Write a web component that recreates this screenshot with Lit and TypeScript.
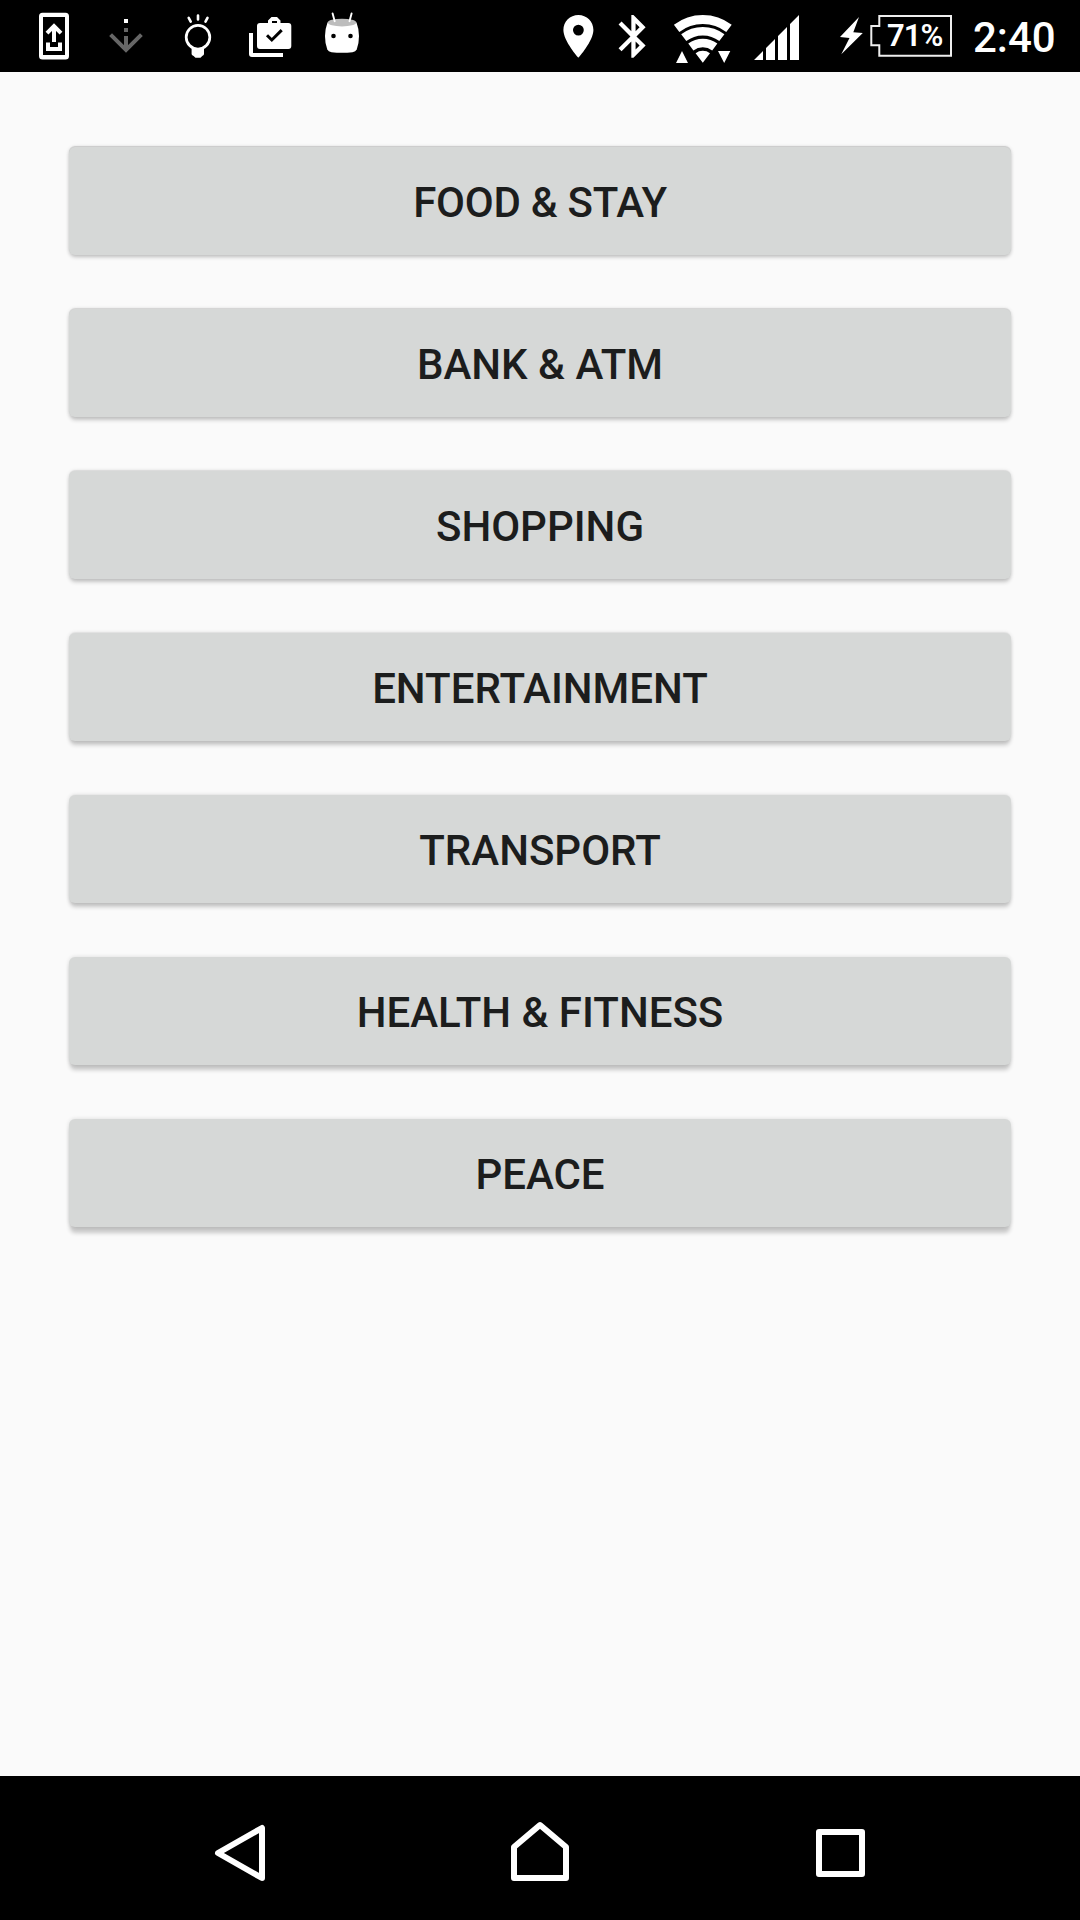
import { LitElement, html, css, svg } from "lit";
import { customElement, property } from "lit/decorators.js";
import { styleMap } from "lit/directives/style-map.js";

@customElement("status-bar")
class StatusBar extends LitElement {
  static styles = css`
    :host {
      display: flex;
      justify-content: space-between;
      height: 72px;
      background: #000;
      color: #fff;
      font-family: Roboto, sans-serif;
      font-weight: 500;
    }
    svg {
      display: block;
      flex: none;
    }
    .group {
      display: flex;
      height: 72px;
    }
    .left {
      padding-left: 18px;
    }
    .right {
      padding-right: 26px;
    }
    .battery {
      display: grid;
      margin-left: 24px;
    }
    .battery > * {
      grid-area: 1 / 1;
    }
    .percent {
      padding-left: 53px;
      font-size: 31px;
      font-weight: 600;
      line-height: 71px;
      letter-spacing: -0.9px;
    }
    .clock {
      width: 81px;
      margin-left: 13px;
      font-size: 42px;
      line-height: 76px;
      text-align: right;
      white-space: nowrap;
    }
  `;

  render() {
    const band = (inner: number, outer: number) => {
      const r = (inner + outer) / 2;
      const x = r * 0.606;
      const y = 62.7 - r * 0.795;
      return svg`<path d="M${702.8 - x} ${y}A${r} ${r} 0 0 1 ${702.8 + x} ${y}"
        fill="none" stroke="#fff" stroke-width=${outer - inner} />`;
    };
    return html`
      <div class="group left">
        <svg width="72" height="72" viewBox="18 0 72 72">
          <path fill="#fff" fill-rule="evenodd" d="M42.5 12.7H65.5Q69 12.7 69 16.2V56Q69 59.5 65.5 59.5H42.5Q39 59.5 39 56V16.2Q39 12.7 42.5 12.7zM43 17V55H65V17z" />
          <path fill="none" stroke="#fff" stroke-width="4" d="M54 26V42M47 33.2L54 26.2L61 33.2M48 42.5V49H60V42.5" />
        </svg>
        <svg width="72" height="72" viewBox="90 0 72 72">
          <path fill="#fff" d="M124 19h4v4h-4z" />
          <path fill="#666" d="M124 28h4v4h-4zM124 36h4v13h-4z" />
          <path fill="none" stroke="#666" stroke-width="4" d="M110.6 34.6L126 50L141.4 34.6" />
        </svg>
        <svg width="72" height="72" viewBox="162 0 72 72">
          <circle cx="198" cy="37.2" r="11.8" fill="none" stroke="#fff" stroke-width="2.7" />
          <path fill="none" stroke="#fff" stroke-width="2.6" stroke-linecap="round" d="M188.7 17.8L190.7 21.6M198 15.5V19.5M207.5 17.8L205.5 21.6" />
          <path fill="#fff" d="M191.6 46.5Q198 50 204 46.5V54.3Q203.6 55.5 202.2 56L200.5 57.8H195.5L193.6 56Q192 55.5 191.6 54.3z" />
        </svg>
        <svg width="72" height="72" viewBox="234 0 72 72">
          <path fill="#fff" fill-rule="evenodd" d="M260 23H268V20.5L271.5 17H277L280.5 20.5V23H288.3Q291.3 23 291.3 26V46Q291.3 49 288.3 49H260Q257 49 257 46V26Q257 23 260 23zM272 21V23H277V21z" />
          <path fill="none" stroke="#000" stroke-width="3" d="M267 35.2L271.8 40L281.7 30.1" />
          <path fill="#fff" d="M249 33H253V53H283V57H252Q249 57 249 54z" />
        </svg>
        <svg width="72" height="72" viewBox="306 0 72 72">
          <path fill="#fff" d="M327.5 22.5Q325 29 325 36Q325 44 327.3 49.5Q328.3 51.7 331.5 52.2Q342 53.5 352.5 52.2Q355.7 51.7 356.7 49.5Q359 44 359 36Q359 29 356.5 22.5z" />
          <ellipse cx="342" cy="22.6" rx="14.3" ry="3.9" fill="#bdbdbd" />
          <path fill="none" stroke="#fff" stroke-width="1.9" stroke-linecap="round" d="M332.6 13.5L334.7 21.2M351.6 13.5L349.5 21.2" />
          <circle cx="333.5" cy="36" r="2.3" />
          <circle cx="350.5" cy="36" r="2.3" />
        </svg>
      </div>
      <div class="group right">
        <svg width="56" height="72" viewBox="550 0 56 72">
          <path fill="#fff" fill-rule="evenodd" d="M578.4 15C570 15 563.4 21.6 563.4 30C563.4 41 578.4 57.8 578.4 57.8S593.4 41 593.4 30C593.4 21.6 586.7 15 578.4 15zM578.4 35.5a5.4 5.4 0 1 1 0-10.8a5.4 5.4 0 0 1 0 10.8z" />
        </svg>
        <svg width="54" height="72" viewBox="606 0 54 72">
          <path fill="#fff" transform="translate(607.9 10.7) scale(2.13 2.14)" d="M17.71 7.71L12 2h-1v7.59L6.41 5 5 6.41 10.59 12 5 17.59 6.41 19 11 14.41V22h1l5.71-5.71-4.3-4.29 4.3-4.29zM13 5.83l1.88 1.88L13 9.59V5.83zm1.88 10.46L13 18.17v-3.76l1.88 1.88z" />
        </svg>
        <svg width="84" height="72" viewBox="660 0 84 72">
          ${band(38.7, 47.7)}${band(27.2, 35.7)}${band(15.5, 24)}
          <path fill="#fff" d="M702.8 62.8L695.6 53.2A12 12 0 0 1 710 53.2zM682 51L688 63H676zM718 51H730.3L724.2 63z" />
        </svg>
        <svg width="66" height="72" viewBox="744 0 66 72">
          <path fill="#fff" d="M754 60L763 51V60zM766 48L775 39V60H766zM778 36L787 27V60H778zM790 24L799 15V60H790z" />
        </svg>
        <div class="battery">
          <svg width="126" height="72" viewBox="834 0 126 72">
            <path fill="#fff" d="M859 17L840 37L849.5 38L841.3 54.2L862.8 33L853.3 32.3z" />
            <path fill="none" stroke="#eee" stroke-width="2" d="M879.3 16H951V55.7H879.3V45.2H871.3V26H879.3z" />
          </svg>
          <span class="percent">71%</span>
        </div>
        <div class="clock">2:40</div>
      </div>
    `;
  }
}

@customElement("category-button")
class CategoryButton extends LitElement {
  @property() label = "";
  /** Shadow drop in pixels; it grows with the distance from the screen's top. */
  @property({ type: Number }) drop = 1;
  /** Opacity of the thin shadow above the top edge. */
  @property({ type: Number }) rim = 0;
  /** Letter spacing in pixels. */
  @property({ type: Number }) tracking = 0;

  static styles = css`
    :host {
      display: block;
    }
    .button {
      display: block;
      width: 100%;
      height: 108px;
      margin: 0;
      padding: 0;
      border: 0;
      border-radius: 6px;
      background: #d6d8d7;
      color: #1c1d1d;
      font: 500 42px/112px Roboto, sans-serif;
      text-align: center;
    }
    .label {
      display: block;
      height: 108px;
    }
  `;

  render() {
    const look = {
      boxShadow: `0 0 4px rgba(0,0,0,.13), 0 -1px 1px rgba(0,0,0,${this.rim}), 0 ${this.drop}px 4px -1px rgba(0,0,0,.2)`,
      letterSpacing: `${this.tracking}px`,
    };
    return html`<button class="button" style=${styleMap(look)}>
      <span class="label">${this.label}</span>
    </button>`;
  }
}

@customElement("nav-bar")
class NavBar extends LitElement {
  static styles = css`
    :host {
      display: flex;
      justify-content: center;
      height: 144px;
      background: #000;
    }
    svg {
      display: block;
      fill: none;
      stroke: #fff;
      stroke-width: 6px;
      stroke-linejoin: round;
    }
  `;

  render() {
    return html`
      <svg width="300" height="144" viewBox="90 1776 300 144">
        <path d="M218 1853L262 1828V1878z" />
      </svg>
      <svg width="300" height="144" viewBox="390 1776 300 144">
        <path d="M514 1847L540 1825L566 1847V1878H514z" />
      </svg>
      <svg width="300" height="144" viewBox="690 1776 300 144">
        <path d="M819 1832H862V1874H819z" />
      </svg>
    `;
  }
}

@customElement("app-root")
class AppRoot extends LitElement {
  private categories = [
    { label: "FOOD & STAY", tracking: -0.25 },
    { label: "BANK & ATM", tracking: 0 },
    { label: "SHOPPING", tracking: 0 },
    { label: "ENTERTAINMENT", tracking: 0 },
    { label: "TRANSPORT", tracking: 0 },
    { label: "HEALTH & FITNESS", tracking: 0 },
    { label: "PEACE", tracking: 0 },
  ];

  static styles = css`
    :host {
      display: flex;
      flex-direction: column;
      height: 1920px;
      background: #fafafa;
    }
    .list {
      flex: 1;
      display: flex;
      flex-direction: column;
      gap: 54px;
      padding: 75px 69px 0;
    }
  `;

  render() {
    return html`
      <status-bar></status-bar>
      <main class="list">
        ${this.categories.map(
          (c, i) => html`<category-button
            .label=${c.label}
            .tracking=${c.tracking}
            .drop=${2.6 + i * 0.6}
            .rim=${Math.max(0, 0.14 - i * 0.03)}
          ></category-button>`
        )}
      </main>
      <nav-bar></nav-bar>
    `;
  }
}
